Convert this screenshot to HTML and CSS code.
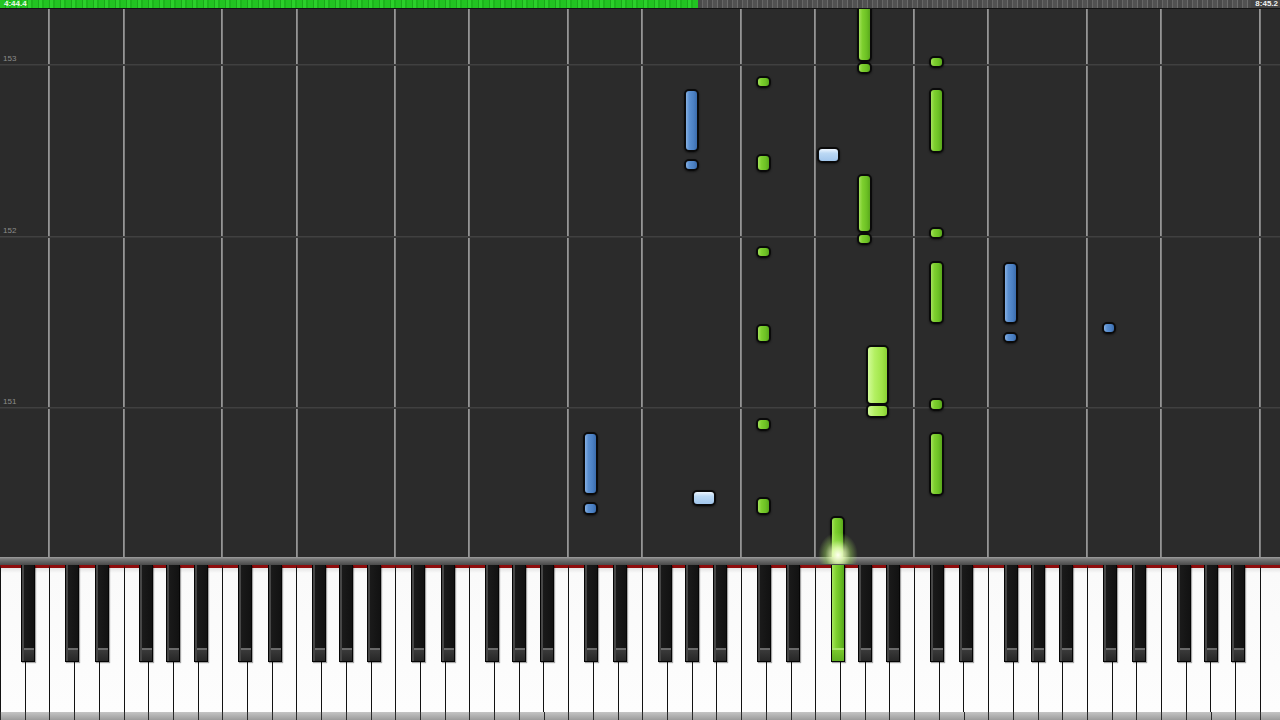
FILE: index.html
```html
<!DOCTYPE html>
<html lang="en">

<head>
    <meta charset="UTF-8" />
    <meta name="viewport" content="width=device-width, initial-scale=1.0" />
    <title>Synthesia</title>
    <link rel="stylesheet" href="styles.css">
</head>

<body>
    <div class="synth">
        <!-- 进度条 -->
        <div class="progress">
            <div class="progress-fill"><span class="time">4:44.4</span></div>
            <div class="progress-rest"><span class="time">8:45.2</span></div>
        </div>
        <!-- 下落音符区域 -->
        <div class="roll"></div>
        <div class="rail"></div>
        <!-- 键盘 -->
        <div class="keyboard"></div>
        <div class="keyboard-base"></div>
        <div class="glow"></div>
    </div>

    <script src="script.js"></script>
</body>

</html>
```

FILE: styles.css
```css
* {
    box-sizing: border-box;
}

body {
    margin: 0;
    background: #111;
    font-family: "Liberation Sans", Arial, sans-serif;
}

.synth {
    width: 1280px;
    height: 720px;
    overflow: hidden;
    position: relative;
    display: flex;
    flex-direction: column;
}

.progress {
    height: 9px;
    display: flex;
    border-bottom: 1px solid #141414;
}

.progress-fill {
    width: 698px;
    background: repeating-linear-gradient(90deg, #22c422 0, #22c422 5px, #1aa91a 5px, #1aa91a 6px, #2bd02b 6px, #2bd02b 9px, #1cb51c 9px, #1cb51c 11px);
}

.progress-rest {
    flex: 1;
    text-align: right;
    background: repeating-linear-gradient(90deg, #4a4a4a 0, #4a4a4a 4px, #666 4px, #666 5px, #525252 5px, #525252 9px, #6c6c6c 9px, #6c6c6c 10px);
}

.time {
    display: inline-block;
    font-size: 8px;
    line-height: 8px;
    font-weight: bold;
    color: #eaf8e6;
    padding: 0 2px 0 4px;
    vertical-align: top;
}

.progress-rest .time {
    background: #444;
    color: #f0f0f0;
}

.roll {
    height: 548px;
    position: relative;
    overflow: hidden;
    background: #2b2b2b;
}

.grid-line {
    position: absolute;
    top: 0;
    bottom: 0;
    width: 2px;
    background: linear-gradient(90deg, #a0a0a0, #747474);
}

.measure {
    position: absolute;
    left: 0;
    right: 0;
    height: 1px;
    background: #404040;
    box-shadow: 0 1px 0 #353535;
}

.measure span {
    position: absolute;
    left: 3px;
    bottom: 2px;
    font-size: 8px;
    line-height: 8px;
    color: #8c8c8c;
}

.note {
    position: absolute;
    border: 2px solid #0a0a0a;
    border-radius: 5px;
    box-shadow: 0 1px 2px rgba(0, 0, 0, 0.5);
}

.note.g {
    background: linear-gradient(90deg, #a4e25a 0, #7ed02f 30%, #6cc024 70%, #5aa81c 100%);
}

.note.b {
    background: linear-gradient(90deg, #86b0e2 0, #5a8fd0 30%, #4b80c3 70%, #3b6cac 100%);
}

.note.lb {
    background: linear-gradient(180deg, #eef6ff 0, #bcd9f4 35%, #a2c6ec 100%);
}

.note.lg {
    background: linear-gradient(90deg, #d2fb98 0, #b3f062 35%, #9fe447 75%, #8ad234 100%);
}

.rail {
    height: 8px;
    background: linear-gradient(180deg, #a0a0a0 0, #7a7a7a 2px, #606060 5px, #4a4a4a 8px);
}

.keyboard {
    height: 147px;
    position: relative;
    display: flex;
    overflow: hidden;
}

.white-key {
    flex: 0 0 24.706px;
    border-top: 3px solid #8e0c0c;
    border-left: 1px solid #121212;
    background: linear-gradient(180deg, #e4e4e4 0, #fafafa 5px, #fdfdfd 100%);
}

.black-key {
    position: absolute;
    top: 0;
    width: 14px;
    height: 97px;
    border: 1px solid #050505;
    border-top: none;
    background: linear-gradient(90deg, #464646 0, #464646 2px, #1a1a1a 2px, #121212 100%);
    box-shadow: 1px 1px 1px rgba(0, 0, 0, 0.35);
}

.black-key::after {
    content: '';
    position: absolute;
    left: 2px;
    right: 0;
    bottom: 0;
    height: 11px;
    border-top: 2px solid #6a6a6a;
    background: linear-gradient(180deg, #3a3a3a, #262626);
}

.black-key.pressed {
    background: linear-gradient(90deg, #a6e65c 0, #7fd02f 35%, #66bb22 75%, #55a61a 100%);
}

.black-key.pressed::after {
    left: 0;
    border-top-color: #a8e46a;
    background: linear-gradient(180deg, #79c92c, #5fae20);
}

.keyboard-base {
    height: 8px;
    background:
        repeating-linear-gradient(90deg, #2a2a2a 0, #2a2a2a 1px, transparent 1px, transparent 24.706px),
        linear-gradient(180deg, #c4c4c4, #9c9c9c);
}

.glow {
    position: absolute;
    left: 818px;
    top: 532px;
    width: 40px;
    height: 32px;
    background: radial-gradient(ellipse at 50% 72%, rgba(255, 255, 240, 1) 0, rgba(230, 255, 180, 0.85) 22%, rgba(170, 235, 100, 0.4) 45%, rgba(160, 230, 90, 0) 70%);
    pointer-events: none;
}
```

FILE: script.js
```js
// 白键宽度：C8 的左边缘在 1260px
const W = 1260 / 51
const names = ['A', 'B', 'C', 'D', 'E', 'F', 'G']
// 黑键相对白键分界线的偏移
const offsets = { A: 3.1, C: -2.3, D: 2.8, F: -2.4, G: 0.4 }
const pressedIndex = 33 // F5 -> F#5 按下

const roll = document.querySelector('.roll')
const keyboard = document.querySelector('.keyboard')
const ROLL_TOP = 9

// 键盘
for (let i = 0; i < 52; i++) {
    const name = names[i % 7]
    const white = document.createElement('div')
    white.className = 'white-key'
    keyboard.appendChild(white)

    if (offsets[name] !== undefined && i < 51) {
        const black = document.createElement('div')
        black.className = 'black-key' + (i === pressedIndex ? ' pressed' : '')
        black.style.left = ((i + 1) * W + offsets[name] - 7).toFixed(1) + 'px'
        keyboard.appendChild(black)
    }

    // C 和 F 的竖线
    if (i > 0 && (name === 'C' || name === 'F')) {
        const line = document.createElement('div')
        line.className = 'grid-line'
        line.style.left = (i * W - 1).toFixed(1) + 'px'
        roll.appendChild(line)
    }
}

// 小节线
const measures = [
    { y: 64, label: '153' },
    { y: 236, label: '152' },
    { y: 407, label: '151' },
]
measures.forEach(function (m) {
    const el = document.createElement('div')
    el.className = 'measure'
    el.style.top = (m.y - ROLL_TOP) + 'px'
    el.innerHTML = '<span>' + m.label + '</span>'
    roll.appendChild(el)
})

// 音符 [x1, x2, y1, y2, 颜色]
const notes = [
    [583, 598, 432, 495, 'b'],
    [583, 598, 502, 515, 'b'],
    [684, 699, 89, 152, 'b'],
    [684, 699, 159, 171, 'b'],
    [1003, 1018, 262, 324, 'b'],
    [1003, 1018, 332, 343, 'b'],
    [1102, 1116, 322, 334, 'b'],
    [692, 716, 490, 506, 'lb'],
    [817, 840, 147, 163, 'lb'],
    [756, 771, 76, 88, 'g'],
    [756, 771, 154, 172, 'g'],
    [756, 771, 246, 258, 'g'],
    [756, 771, 324, 343, 'g'],
    [756, 771, 418, 431, 'g'],
    [756, 771, 497, 515, 'g'],
    [857, 872, 0, 62, 'g'],
    [857, 872, 62, 74, 'g'],
    [857, 872, 174, 233, 'g'],
    [857, 872, 233, 245, 'g'],
    [929, 944, 56, 68, 'g'],
    [929, 944, 88, 153, 'g'],
    [929, 944, 227, 239, 'g'],
    [929, 944, 261, 324, 'g'],
    [929, 944, 398, 411, 'g'],
    [929, 944, 432, 496, 'g'],
    [830, 845, 516, 566, 'g'],
    [866, 889, 345, 405, 'lg'],
    [866, 889, 404, 418, 'lg'],
]
notes.forEach(function (n) {
    const el = document.createElement('div')
    el.className = 'note ' + n[4]
    el.style.left = n[0] + 'px'
    el.style.width = (n[1] - n[0]) + 'px'
    el.style.top = (n[2] - ROLL_TOP) + 'px'
    el.style.height = (n[3] - n[2]) + 'px'
    roll.appendChild(el)
})
```
